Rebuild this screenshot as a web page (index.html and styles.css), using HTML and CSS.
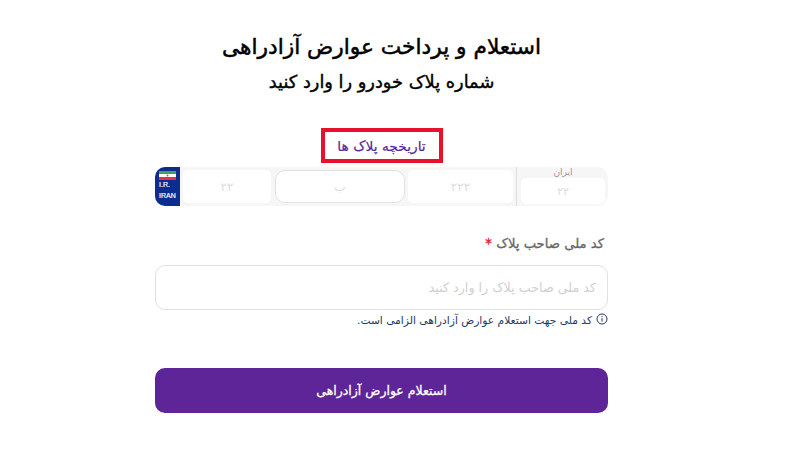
FILE: index.html
```html
<!DOCTYPE html>
<html lang="fa" dir="rtl">
<head>
    <meta charset="UTF-8">
    <meta name="viewport" content="width=device-width, initial-scale=1.0">
    <title>استعلام عوارض آزادراهی</title>
    <link rel="stylesheet" href="styles.css">
</head>
<body>

<main class="page">
    <h1 class="title">استعلام و پرداخت عوارض آزادراهی</h1>
    <h2 class="subtitle">شماره پلاک خودرو را وارد کنید</h2>

    <a class="history-link" href="#">تاریخچه پلاک ها</a>

    <div class="plate">
        <div class="plate-region">
            <span class="region-label">ایران</span>
            <span class="region-input">۲۲</span>
        </div>
        <div class="plate-cell plate-three">۲۲۲</div>
        <div class="plate-cell plate-letter">ب</div>
        <div class="plate-cell plate-two">۲۲</div>
        <div class="plate-flag">
            <svg class="flag" viewBox="0 0 17 9" aria-hidden="true">
                <rect width="17" height="3" fill="#3fa45b"/>
                <rect y="3" width="17" height="3" fill="#ffffff"/>
                <rect y="6" width="17" height="3" fill="#e0343f"/>
                <circle cx="8.5" cy="4.5" r="1" fill="#d9534f"/>
            </svg>
            <span class="flag-text">I.R.</span>
            <span class="flag-text">IRAN</span>
        </div>
    </div>

    <label class="field-label" for="nationalCode">کد ملی صاحب پلاک <span class="star">*</span></label>
    <input class="field-input" id="nationalCode" type="text" placeholder="کد ملی صاحب پلاک را وارد کنید">

    <div class="hint">
        <svg class="hint-icon" viewBox="0 0 12 12" aria-hidden="true">
            <circle cx="6" cy="6" r="5" fill="none" stroke="#1d3a5f" stroke-width="1"/>
            <rect x="5.5" y="5" width="1" height="3.6" fill="#1d3a5f"/>
            <rect x="5.5" y="3" width="1" height="1" fill="#1d3a5f"/>
        </svg>
        <span>کد ملی جهت استعلام عوارض آزادراهی الزامی است.</span>
    </div>

    <button class="submit-btn" type="button">استعلام عوارض آزادراهی</button>
</main>

</body>
</html>
```

FILE: styles.css
```css
* {
    box-sizing: border-box;
}

body {
    margin: 0;
    background-color: #ffffff;
    font-family: "DejaVu Sans", sans-serif;
}

.page {
    width: 453px;
    margin-right: 192px;
    padding-top: 34px;
    display: flex;
    flex-direction: column;
    align-items: center;
}

.title {
    margin: 0;
    height: 26px;
    line-height: 26px;
    font-size: 21.7px;
    font-weight: normal;
    -webkit-text-stroke: 0.5px #000000;
    color: #000000;
}

.subtitle {
    margin: 10px 0 0;
    height: 24px;
    line-height: 24px;
    font-size: 17.8px;
    font-weight: normal;
    -webkit-text-stroke: 0.4px #000000;
    color: #000000;
}

.history-link {
    margin-top: 34px;
    width: 122px;
    height: 35px;
    border: 4px solid #e8112d;
    display: flex;
    align-items: center;
    justify-content: center;
    font-size: 13.8px;
    -webkit-text-stroke: 0.2px #5a1fa0;
    color: #5a1fa0;
    text-decoration: none;
}

.plate {
    margin-top: 4px;
    width: 100%;
    height: 39px;
    background-color: #f6f6f6;
    border-radius: 10px;
    display: flex;
    align-items: center;
}

.plate-region {
    width: 92px;
    height: 100%;
    padding: 0 3px 0 4px;
    border-left: 1px solid #dddddd;
    display: flex;
    flex-direction: column;
    align-items: center;
}

.region-label {
    height: 10px;
    line-height: 10px;
    font-size: 9px;
    color: #999999;
}

.region-input {
    margin-top: 1px;
    width: 100%;
    height: 26px;
    background-color: #ffffff;
    border-radius: 5px;
    display: flex;
    align-items: center;
    justify-content: center;
    font-size: 11px;
    color: #dcdcdc;
}

.plate-cell {
    height: 33px;
    background-color: #ffffff;
    border-radius: 5px;
    display: flex;
    align-items: center;
    justify-content: center;
    font-size: 12px;
    color: #dcdcdc;
}

.plate-three {
    width: 105px;
    margin-right: 3px;
}

.plate-letter {
    width: 130px;
    margin-right: 3px;
    border: 1px solid #e2e2e2;
    border-radius: 10px;
}

.plate-two {
    width: 88px;
    margin-right: 4px;
}

.plate-flag {
    margin-right: 3px;
    width: 25px;
    height: 100%;
    padding: 4px 0 0 4px;
    background-color: #0c2d8f;
    border-top-left-radius: 10px;
    border-bottom-left-radius: 10px;
    display: flex;
    flex-direction: column;
    align-items: flex-start;
    direction: ltr;
}

.flag {
    width: 17px;
    height: 9px;
    display: block;
}

.flag-text {
    margin-bottom: 2px;
    height: 9px;
    line-height: 9px;
    font-family: "Liberation Sans", sans-serif;
    font-size: 7px;
    color: #ffffff;
    -webkit-text-stroke: 0.2px #ffffff;
}

.field-label {
    margin-top: 29px;
    padding-right: 4px;
    width: 100%;
    height: 18px;
    line-height: 18px;
    font-size: 13.2px;
    -webkit-text-stroke: 0.3px #666666;
    color: #666666;
}

.star {
    color: #e8112d;
    -webkit-text-stroke: 0.3px #e8112d;
}

.field-input {
    margin-top: 12px;
    width: 100%;
    height: 45px;
    padding: 0 11px;
    background-color: #ffffff;
    border: 1px solid #e0e0e0;
    border-radius: 10px;
    outline: none;
    font-family: "DejaVu Sans", sans-serif;
    font-size: 12.7px;
}

.field-input::placeholder {
    color: #d0d0d0;
}

.hint {
    margin-top: 3px;
    width: 100%;
    display: flex;
    align-items: flex-start;
    gap: 4px;
    font-size: 10.7px;
    color: #1d3a5f;
}

.hint span {
    line-height: 16px;
}

.hint-icon {
    width: 12px;
    height: 12px;
    flex: none;
}

.submit-btn {
    margin-top: 39px;
    width: 100%;
    height: 45px;
    background-color: #5e2599;
    color: #ffffff;
    border: none;
    border-radius: 10px;
    font-family: "DejaVu Sans", sans-serif;
    font-size: 12.5px;
    -webkit-text-stroke: 0.3px #ffffff;
}
```
